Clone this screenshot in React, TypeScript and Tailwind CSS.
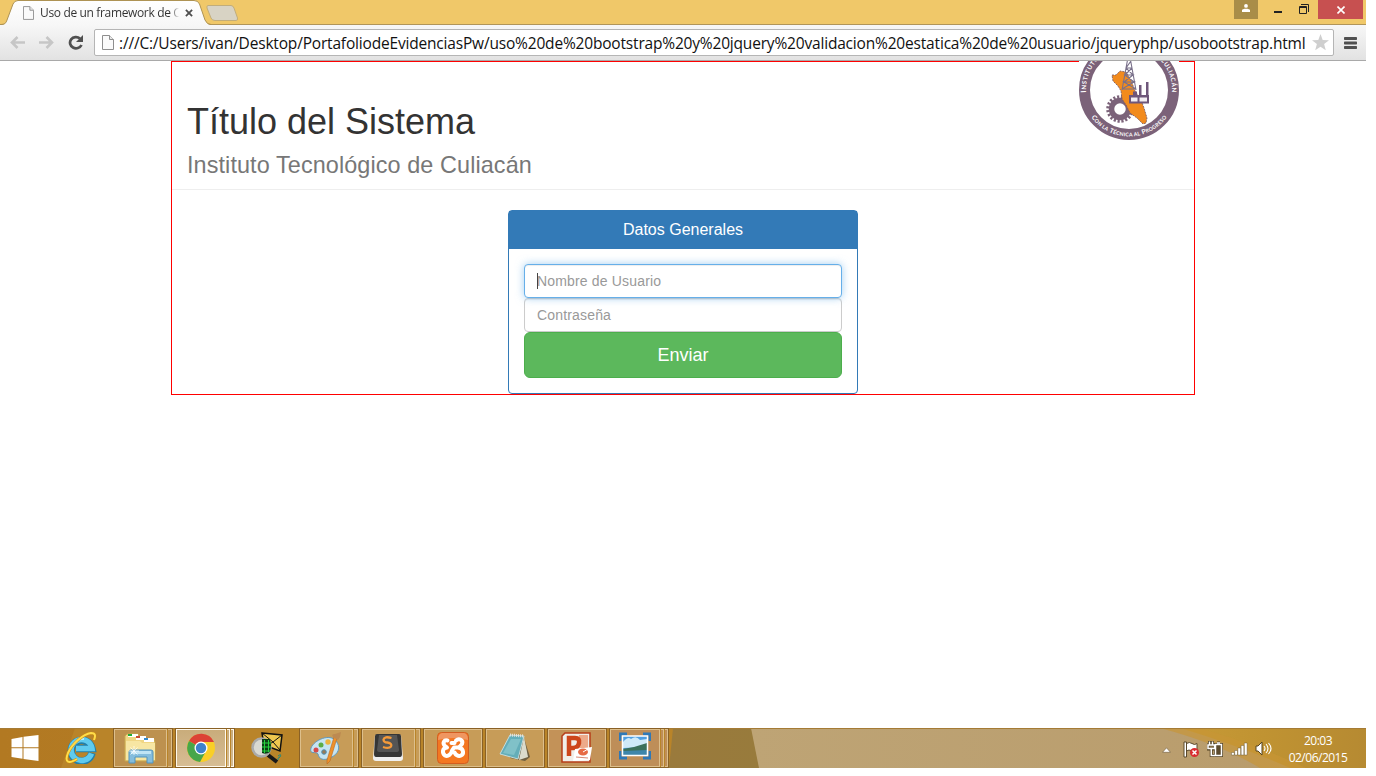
import type { ReactNode } from "react";

function PageIcon({ className }: { className: string }) {
  return (
    <svg className={className} viewBox="0 0 12 15" fill="#fafafa" stroke="#8e8e8e">
      <path d="M.5.5h7l4 4v10H.5z" />
      <path d="M7.5.5v4h4" fill="#e8e8e8" />
    </svg>
  );
}

function TabBar() {
  return (
    <div className="relative flex h-[25px] shrink-0 items-start bg-[#f0c869]">
      <svg className="absolute left-0 top-0" width="1366" height="25" viewBox="0 0 1366 25">
        <defs>
          <linearGradient id="tab" x1="0" y1="0" x2="0" y2="1">
            <stop offset="0" stopColor="#fff" />
            <stop offset="1" stopColor="#f7f7f7" />
          </linearGradient>
        </defs>
        <path d="M0 24.5H1366" stroke="#b19559" />
        <path d="M0 25C5 25 6 23 7 20L13 4Q14.500 .500 18 .500H194Q198 .500 199.500 4L205 20Q207 25 211 25Z" fill="url(#tab)" />
        <path d="M0 24.500C5 24.500 6 23 7 20L13 4Q14.500 .500 18 .500H194Q198 .500 199.500 4L205 20Q207 24.500 211 24.500" fill="none" stroke="#ae9354" />
        <path d="M208 5.500H231Q233 5.500 234 8L237.500 18Q238 20.500 236 20.500H215Q212 20.500 211 18L207 8Q206.500 5.500 208 5.500Z" fill="#d8d3c4" stroke="#c1ad7b" />
      </svg>
      <div className="relative flex h-[25px] w-[211px] items-center pl-[23px]">
        <PageIcon className="h-[14px] w-[11px]" />
        <div className="ml-1.5 w-[139px] overflow-hidden whitespace-nowrap bg-linear-to-r from-[#303030] from-94% to-transparent bg-clip-text font-['Open_Sans','Noto_Sans',sans-serif] text-[12px] leading-[18px] tracking-[-0.35px] text-transparent">
          Uso de un framework de C
        </div>
        <svg className="ml-[6px]" width="8" height="8" viewBox="0 0 9 9" stroke="#4e4e4e" strokeWidth="2"><path d="M1 1l7 7M8 1L1 8" /></svg>
      </div>
      <div className="relative ml-auto flex h-[19px] pr-[3px]">
        <div className="flex h-[19px] w-6 justify-center bg-[#a98d48] pt-1">
          <svg width="8" height="8" viewBox="0 0 8 8" fill="#fff"><circle cx="4" cy="1.900" r="1.900" /><path d="M0 8V5.800L2.500 4.700h3L8 5.800V8z" /></svg>
        </div>
        <div className="flex w-10 justify-center pt-[11px]"><div className="h-[2px] w-2 bg-[#222]" /></div>
        <div className="flex w-3 pt-1">
          <svg className="ml-px" width="10" height="10" viewBox="0 0 10 10" fill="none" stroke="#222"><path d="M.5 2.500h7v7h-7zM.5 3.500h7M2 .5h7.500V8" /></svg>
        </div>
        <div className="ml-[8px] flex w-[45px] items-center justify-center bg-[#c75050]">
          <svg width="8" height="8" viewBox="0 0 8 8" stroke="#fff" strokeWidth="1.600"><path d="M.5.5l7 7M7.500.5l-7 7" /></svg>
        </div>
      </div>
    </div>
  );
}

function Toolbar() {
  return (
    <div className="flex h-9 shrink-0 items-start border-b border-[#a9a9a9] bg-linear-to-b from-[#f7f7f7] to-[#e2e2e2] pl-[9px] pt-1">
      <svg className="mt-[6px]" width="17" height="15" viewBox="0 0 17 15" fill="none" stroke="#c6c6c6" strokeWidth="2.600"><path d="M3 7.500h13M8.500 2L3 7.500 8.500 13" /></svg>
      <svg className="ml-[12px] mt-[6px]" width="17" height="15" viewBox="0 0 17 15" fill="none" stroke="#c6c6c6" strokeWidth="2.600"><path d="M1 7.500h13M8.500 2L14 7.500 8.500 13" /></svg>
      <svg className="ml-[13px] mt-[6px]" width="16" height="15" viewBox="0 0 16 15" fill="none" stroke="#505050" strokeWidth="2.700"><path d="M13.500 10A6 5.600 0 1 1 12 3.500" /><path d="M15 0v7H8z" fill="#505050" stroke="none" /></svg>
      <div className="ml-[10px] flex h-[27px] w-[1240px] items-center rounded-[2px] border border-[#b5b5b5] bg-white pl-[7px]">
        <PageIcon className="h-[15px] w-3" />
        <div className="ml-[5px] h-6 w-[1189px] whitespace-nowrap font-['Open_Sans','Noto_Sans',sans-serif] text-[15.5px] leading-6 tracking-[-0.182px] text-[#111]">
          :///C:/Users/ivan/Desktop/PortafoliodeEvidenciasPw/uso%20de%20bootstrap%20y%20jquery%20validacion%20estatica%20de%20usuario/jqueryphp/usobootstrap.html
        </div>
        <svg className="ml-1" width="17" height="17" viewBox="0 0 17 17" fill="#cfcfcf"><path d="M8.500 0l2.200 5.900 6.300.3-4.900 3.900 1.700 6.100-5.300-3.500-5.300 3.500 1.700-6.100L0 6.200l6.300-.3z" /></svg>
      </div>
      <svg className="ml-[10px] mt-2" width="13" height="12" viewBox="0 0 13 12" fill="#505050"><rect width="13" height="3" rx=".7" /><rect y="4.500" width="13" height="3" rx=".7" /><rect y="9" width="13" height="3" rx=".7" /></svg>
    </div>
  );
}

function Seal() {
  return (
    <svg className="absolute right-[15px] -top-px" width="100" height="79" viewBox="0 21 100 79">
      <defs>
        <path id="upper" d="M7.800 58A43 43 0 1 1 92.200 58" />
        <path id="lower" d="M3.500 50A46.500 46.500 0 0 0 96.500 50" />
      </defs>
      <rect y="21" width="100" height="79" fill="#fff" />
      <circle cx="50" cy="50" r="44.500" fill="none" stroke="#7b6279" strokeWidth="11" />
      <g fill="none" stroke="#7b6279">
        <circle cx="41" cy="69" r="8.500" strokeWidth="5.500" />
        <circle cx="41" cy="69" r="12.300" strokeWidth="3" strokeDasharray="2.200 1.700" />
      </g>
      <path d="M33 35l4 0 4-4 6 1 5 8 4 11 6 9 3 8 3 10-1 5-3 1-6-6-7-5-4-8-4-6-1-8-3-5-5-5z" fill="#f28b1d" stroke="#6e5569" strokeWidth=".8" strokeDasharray="2 1" />
      <path d="M43 50L48.500 20M57 50L51.500 20M43 49h14M44.500 42h11M46 35h8M47 28h6M43 49l12-7-10 0 9-7-8 0 7-7M57 49l-12-7 10 0-9-7 8 0-7-7 5-7" fill="none" stroke="#79708a" strokeWidth="1.100" />
      <path d="M50 55h20v8.500H50zM54 51.500h4v5h-4zM60 45h2.500v12H60zM67 42h2.500v15H67z" fill="#6e567a" />
      <path d="M52 57.500h6.500v4H52zM60.500 57.500H68v4h-7.500z" fill="#f2eef2" />
      <g fill="#fff" className="font-['Lato',sans-serif] text-[7.200px] font-bold">
        <text><textPath href="#upper" startOffset="5.500" textLength="140">I<tspan fontSize="6.100">NSTITUTO</tspan> T<tspan fontSize="6.100">ECNOLÓGICO DE</tspan> C<tspan fontSize="6.100">ULIACÁN</tspan></textPath></text>
        <text textAnchor="middle" className="text-[6.600px]"><textPath href="#lower" startOffset="50%" textLength="88">C<tspan fontSize="5.200">ON LA</tspan> T<tspan fontSize="5.200">ÉCNICA AL</tspan> P<tspan fontSize="5.200">ROGRESO</tspan></textPath></text>
      </g>
    </svg>
  );
}

function WebPage() {
  return (
    <main className="h-[667px] shrink-0 bg-white font-['Liberation_Sans',Arial,sans-serif]">
      <div className="relative ml-[171px] h-[334px] w-[1024px] border border-[red]">
        <Seal />
        <header className="h-[128px] border-b border-[#eeeeee] pl-[15px] pt-10">
          <h1 className="text-[36px] leading-10 text-[#333]">Título del Sistema</h1>
          <h2 className="mt-[10px] text-[23.4px] leading-[26px] tracking-[0.1px] text-[#777]">Instituto Tecnológico de Culiacán</h2>
        </header>
        <section className="mx-auto mt-5 h-[184px] w-[350px] rounded border border-[#337ab7] bg-white">
          <h3 className="flex h-[38px] items-center justify-center bg-[#337ab7] text-base text-white">Datos Generales</h3>
          <form className="flex flex-col px-[15px] pt-[15px]">
            <label className="relative z-10 flex h-[34px] items-center rounded border border-[#66afe9] bg-white pl-3 text-sm tracking-[0.17px] text-[#999] shadow-[inset_0_1px_1px_rgba(0,0,0,.075),0_0_8px_rgba(102,175,233,.6)]">
              <span className="absolute left-3 top-2 h-4 w-px bg-[#444]" />
              Nombre de Usuario
            </label>
            <label className="flex h-[34px] items-center rounded border border-[#ccc] bg-white pl-3 text-sm tracking-[0.17px] text-[#999] shadow-[inset_0_1px_1px_rgba(0,0,0,.075)]">Contraseña</label>
            <button type="button" className="relative z-20 h-[46px] rounded-md border border-[#4cae4c] bg-[#5cb85c] text-lg text-white">Enviar</button>
          </form>
        </section>
      </div>
    </main>
  );
}

type TaskProps = { children: ReactNode; stack?: number; active?: boolean; tint?: string; gap?: string };

function Task({ children, stack = 0, active = false, tint = "bg-[#c79c58]", gap = "mr-[2px]" }: TaskProps) {
  const edge = active ? "border-[#fff9ec]" : "border-[#ddbf8c]";
  const fill = active ? "bg-linear-to-b from-[#c9ac7b] to-[#d7bd94]" : tint;
  const pad = stack === 1 ? "pr-[1px]" : "";
  return (
    <div className={`flex h-10 w-[60px] shrink-0 border border-[#8a6126] ${gap}`}>
      <div className={`flex flex-1 items-center justify-center border ${edge} ${fill} ${pad}`}>{children}</div>
      {Array.from({ length: stack }, (_, i) => (
        <div key={i} className={`ml-px border-y border-r ${edge} ${fill} ${stack > 1 ? "w-[3px]" : "w-1"}`} />
      ))}
    </div>
  );
}

function Explorer() {
  return (
    <svg className="shrink-0" width="32" height="32" viewBox="0 0 32 32">
      <path d="M1 7V4l2-2h11l1 3h6l2 2h7l1 3v19H1z" fill="#f0d684" stroke="#c8a850" />
      <path d="M4 2h10v3H4zM12 4h10v4H12zM20 6h10v4H20z" fill="#fff" />
      <path d="M4 2h4v2H4z" fill="#20ad38" /><path d="M12 4h4v2h-4z" fill="#ca4b32" /><path d="M20 6h4v2h-4z" fill="#338ace" />
      <path d="M2 9h14l2 2h13v17H2z" fill="#f7e6a3" />
      <path d="M5 31V20q0-2 2-2h20q2 0 2 2v11h-6v-6H11v6z" fill="#84bddd" stroke="#5193bd" />
      <path d="M7 19h20v3H7z" fill="#bfe4f5" /><path d="M10 14v9M5 19h10M6.500 15.500l7 7M13.500 15.500l-7 7" stroke="#fff" strokeWidth=".7" />
    </svg>
  );
}

function ChromeIcon() {
  return (
    <svg className="shrink-0" width="30" height="30" viewBox="0 0 30 30">
      <circle cx="15" cy="15" r="14" fill="#f9cf27" />
      <path d="M15 15L3 8A14 14 0 0 1 28 9H15z" fill="#dc4236" />
      <path d="M15 15L3 8A14 14 0 0 0 14 29L20 18z" fill="#47a64a" />
      <circle cx="15" cy="15" r="6.500" fill="#fff" /><circle cx="15" cy="15" r="5.200" fill="#3d82cb" />
    </svg>
  );
}

function TaskIcons() {
  return (
    <>
      <div className="flex w-[113px] shrink-0 items-center">
        <svg className="ml-[11px] mb-px" width="28" height="26" viewBox="0 0 27 26" fill="#fff"><path d="M0 4l11-2v10.300H0zM12 1.800L27 0v12.300H12zM0 13.300h11v10.500L0 22zM12 13.300h15V26l-15-2z" /></svg>
        <svg className="ml-[26px]" width="32" height="32" viewBox="0 0 32 32" fill="none">
          <path d="M27 21A10.500 10.500 0 1 1 27 16.500H11" stroke="#237fa9" strokeWidth="7.500" /><path d="M26.500 21.500A10.500 10.500 0 1 1 27 16.500H11" stroke="#5fcbef" strokeWidth="5.500" />
          <path d="M8 13Q12 6 19 7" stroke="#b4effb" strokeWidth="2" />
          <path d="M29 8C31 3 30 1 26 1 18 2 7 12 3 21-1 31 4 32 12 27" stroke="#c98a11" strokeWidth="3" /><path d="M29 8C31 3 30 1 26 1 18 2 7 12 3 21-1 31 4 32 12 27" stroke="#ffdd4b" strokeWidth="2" />
        </svg>
      </div>
      <Task stack={1} tint="bg-[#bd914f]"><Explorer /></Task>
      <Task active stack={2} gap=""><ChromeIcon /></Task>
      <div className="flex w-16 shrink-0 items-center justify-center">
        <svg width="32" height="32" viewBox="0 0 32 32">
          <path d="M11 1l20 2-2 16-16-6z" fill="#f0c84f" stroke="#111" strokeWidth="1.500" /><path d="M11 1l11 9 9-7M29 18l-7-8-7 4" fill="none" stroke="#111" />
          <path d="M17 23l9 7" stroke="#181818" strokeWidth="4" /><circle cx="10.500" cy="15.500" r="9" fill="#d9d9d2" stroke="#aaa" strokeWidth="2.500" />
          <path d="M11 7h8q2 8 0 13-4 3-8 1z" fill="#0b3d14" /><path d="M13.500 8v13M17.500 8v12M11 11h9M11 15h9M11 19h8" stroke="#27d23d" />
          <path d="M27 24q4-3 2 1-3 1-2 3" fill="none" stroke="#188a83" />
        </svg>
      </div>
      <Task stack={1}>
        <svg className="shrink-0" width="32" height="32" viewBox="0 0 32 32"><path d="M26 9C20 1 4 8 1 16c-2 7 5 3 7 6 1 5 5 7 12 4 9-4 11-11 6-17z" fill="#c6e4f1" stroke="#629abd" /><circle cx="6" cy="18" r="2.500" fill="#d64b49" /><circle cx="11" cy="13" r="2.500" fill="#5cad45" /><circle cx="18" cy="10" r="2.700" fill="#edb43f" /><circle cx="14" cy="20" r="2.300" fill="#987b57" stroke="#4f91b6" /><path d="M27 6l-7 23-3 3 0-4 7-23z" fill="#ef912a" stroke="#b66825" strokeWidth=".6" /><path d="M24 6q-4-4 1-4l6-2-1 5-2 3z" fill="#bd8a51" /></svg>
      </Task>
      <Task stack={1}>
        <svg className="shrink-0" width="32" height="32" viewBox="0 0 32 32"><path d="M3 3h26l2 23q0 3-3 3H4q-3 0-3-3z" fill="#f0f0f0" /><path d="M5 2h22q2 0 2 2l1 18q0 3-2 3H4q-2 0-2-3L3 4q0-2 2-2z" fill="#363636" /><path d="M7 3h18l2 15q0 2-2 2H7q-2 0-2-2z" fill="#555" /><path d="M19.500 6q-7-2-8 1.500 0 3 4 3 5 1 3.500 4-2 2.500-8 .5" fill="none" stroke="#f49a3a" strokeWidth="2.300" /></svg>
      </Task>
      <Task>
        <svg width="32" height="32" viewBox="0 0 32 32"><rect x=".5" y=".5" width="31" height="31" rx="4" fill="#f47721" stroke="#d35d20" /><path d="M1 8Q1 2 5 1h22q4 1 4 7-15-4-30 0z" fill="#ef9660" /><g fill="none" stroke="#fff" strokeWidth="4" strokeLinecap="round" strokeLinejoin="round"><path d="M10.500 8.500C7 7.500 5.500 11 7.500 13.500L10 15.500C5 16 5 21 8 23.500 11 25 14.500 22 15 18.500L17 15.500H22" /><path d="M14.500 11H17.500M19 8.500C22 6 26.500 8 25 12L22 15.500C27 17 27 22 24 23.500 21 25 18.500 22.500 17.500 20.500" /></g></svg>
      </Task>
      <Task>
        <svg width="32" height="32" viewBox="0 0 32 32"><path d="M24 3l7 22-5 4-15-3z" fill="#6f6041" /><path d="M11 3l14 1-6 23L1 22z" fill="#64aeb9" stroke="#c4dcdc" /><path d="M25 5l4 20-9 3z" fill="#dcdccc" /><path d="M11 3l14 1" stroke="#e3e2dc" strokeWidth="3" strokeDasharray="1 1" /><path d="M12 7L4 21l11 2 7-16z" fill="#8bc9cf" opacity=".7" /></svg>
      </Task>
      <Task tint="bg-[#c39258]">
        <svg width="32" height="32" viewBox="0 0 32 32"><path d="M4 1h25v29H1V4z" fill="#f0eee9" stroke="#b63e19" strokeWidth="1.500" /><path d="M18 3h9v13h-9z" fill="#edaa8a" /><path d="M8 24V6h6q5 0 4 5t-6 5H9" fill="none" stroke="#cd461b" strokeWidth="4.500" /><path d="M14 17l17-2-2 13-17 1z" fill="#fff" /><ellipse cx="22" cy="20" rx="5" ry="3.500" fill="#e66b45" /><path d="M22 20l5-3" stroke="#fff" /><path d="M15 25l12 1" stroke="#d68972" /></svg>
      </Task>
      <Task stack={2} tint="bg-[#be8e58]">
        <svg className="mb-1 shrink-0" width="32" height="28" viewBox="0 0 32 28"><path d="M1 9V2h7M24 2h7v7M1 19v7h7M24 26h7v-7" fill="none" stroke="#3079b7" strokeWidth="3" /><path d="M3 4h26v20H3z" fill="#4f9ee0" /><path d="M4 10q5-6 8-3 5-4 9 1l7-1v8L4 16z" fill="#cfe9f8" /><path d="M4 17l11-2 13-4v12H4z" fill="#3c705a" /><path d="M4 19l24-1v5H4z" fill="#3e86ab" /><path d="M3.500 4h25v19.500h-25z" fill="none" stroke="#fff" strokeWidth="1.500" /></svg>
      </Task>
    </>
  );
}

function Taskbar() {
  return (
    <footer className="relative flex h-10 shrink-0 border-t border-[#a67d38] bg-[#b58129]">
      <svg className="absolute left-0 -top-px" width="1366" height="40" viewBox="0 0 1366 40">
        <defs>
          <linearGradient id="wood"><stop offset="0" stopColor="#b27922" /><stop offset="1" stopColor="#bb8830" /></linearGradient>
          <linearGradient id="olive"><stop offset="0" stopColor="#9a7a3c" /><stop offset="1" stopColor="#987b3c" /></linearGradient>
          <linearGradient id="sand"><stop offset="0" stopColor="#bea475" /><stop offset="1" stopColor="#b89b6b" /></linearGradient>
          <linearGradient id="gold"><stop offset="0" stopColor="#c79a36" /><stop offset=".45" stopColor="#c09332" /><stop offset="1" stopColor="#b68a32" /></linearGradient>
        </defs>
        <path d="M0 0H1366V40H0z" fill="url(#wood)" />
        <path d="M75 0h605v40H61z" fill="#b98429" />
        <path d="M673 0h90v40h-94z" fill="url(#olive)" />
        <path d="M751 0h615v40H759z" fill="url(#sand)" />
        <path d="M1180 0h186v40h-76Q1240 18 1180 0z" fill="url(#gold)" />
        <path d="M1160 0h38q53 14 108 40h-46Q1220 16 1160 0z" fill="#c79536" opacity=".65" />
        <path d="M0 .5H1366" stroke="#a57b35" />
      </svg>
      <div className="relative -mt-px flex h-10 w-full">
        <TaskIcons />
        <div className="ml-auto flex items-center pr-[18px] pt-1">
          <svg width="9" height="6" viewBox="0 0 9 6"><path d="M.5 5.300l4-4.500 4 4.500z" fill="#fff" stroke="#7a6545" strokeWidth=".7" /></svg>
          <svg className="ml-[12px] -mt-0.5" width="17" height="18" viewBox="0 0 17 18"><path d="M1 2h2.500v15H1zM3.500 3.500q3-2 5.500 0t5 0v7.500q-3 2-5.500 0t-5 0z" fill="#fff" stroke="#5b4a2d" /><circle cx="11.500" cy="12.500" r="4.500" fill="#d92c31" /><path d="M9.500 10.500l4 4M13.500 10.500l-4 4" stroke="#fff" strokeWidth="1.500" /></svg>
          <svg className="ml-[7px] -mt-0.5" width="17" height="18" viewBox="0 0 17 18" fill="none"><path d="M2.500 1v4M5.500 1v4M1 5h6.500v4H1zM4.250 9v6.500H8M8.500 4.500h6v11h-6zM10 3h3" stroke="#4f3f21" strokeWidth="3" /><path d="M2.500 1.500v3M5.500 1.500v3M1 5h6.500v3.500H1zM4.250 9v6.500H8M10 3h3" stroke="#fff" strokeWidth="1.500" /><path d="M8.500 4.500h6v11h-6z" stroke="#fff" strokeWidth="1.500" fill="#5b4a2d" /></svg>
          <svg className="ml-[7px] -mt-0.5" width="17" height="14" viewBox="0 0 17 14" fill="#fff" stroke="#58461f" strokeWidth=".4"><path d="M.5 10.500h2.800v2.500H.5zM3.700 8.500h2.800V13H3.700zM6.900 6h2.800v7H6.900zM10.100 3.500h2.800V13h-2.800zM13.300 1h2.800v12h-2.800z" /></svg>
          <svg className="ml-[7px] -mt-0.5" width="17" height="16" viewBox="0 0 17 16" fill="none"><path d="M1 5h2l4-4v13l-4-4H1z" fill="#fff" stroke="#57451f" /><path d="M9 5q2 2.500 0 5M11 3q4 4.500 0 9M13.500 2q5 5.500 0 11" stroke="#fff" strokeWidth="1.100" /></svg>
          <div className="ml-[16px] -mt-0.5 w-[60px] whitespace-nowrap text-center font-['Open_Sans','Noto_Sans',sans-serif] text-[12px] leading-[17px] tracking-[-0.5px] text-white">
            <div>20:03</div>
            <div>02/06/2015</div>
          </div>
        </div>
      </div>
    </footer>
  );
}

export default function App() {
  return (
    <div className="h-[776px] w-[1376px] overflow-hidden bg-white">
      <div className="flex h-[768px] w-[1366px] flex-col">
        <TabBar />
        <Toolbar />
        <WebPage />
        <Taskbar />
      </div>
    </div>
  );
}
